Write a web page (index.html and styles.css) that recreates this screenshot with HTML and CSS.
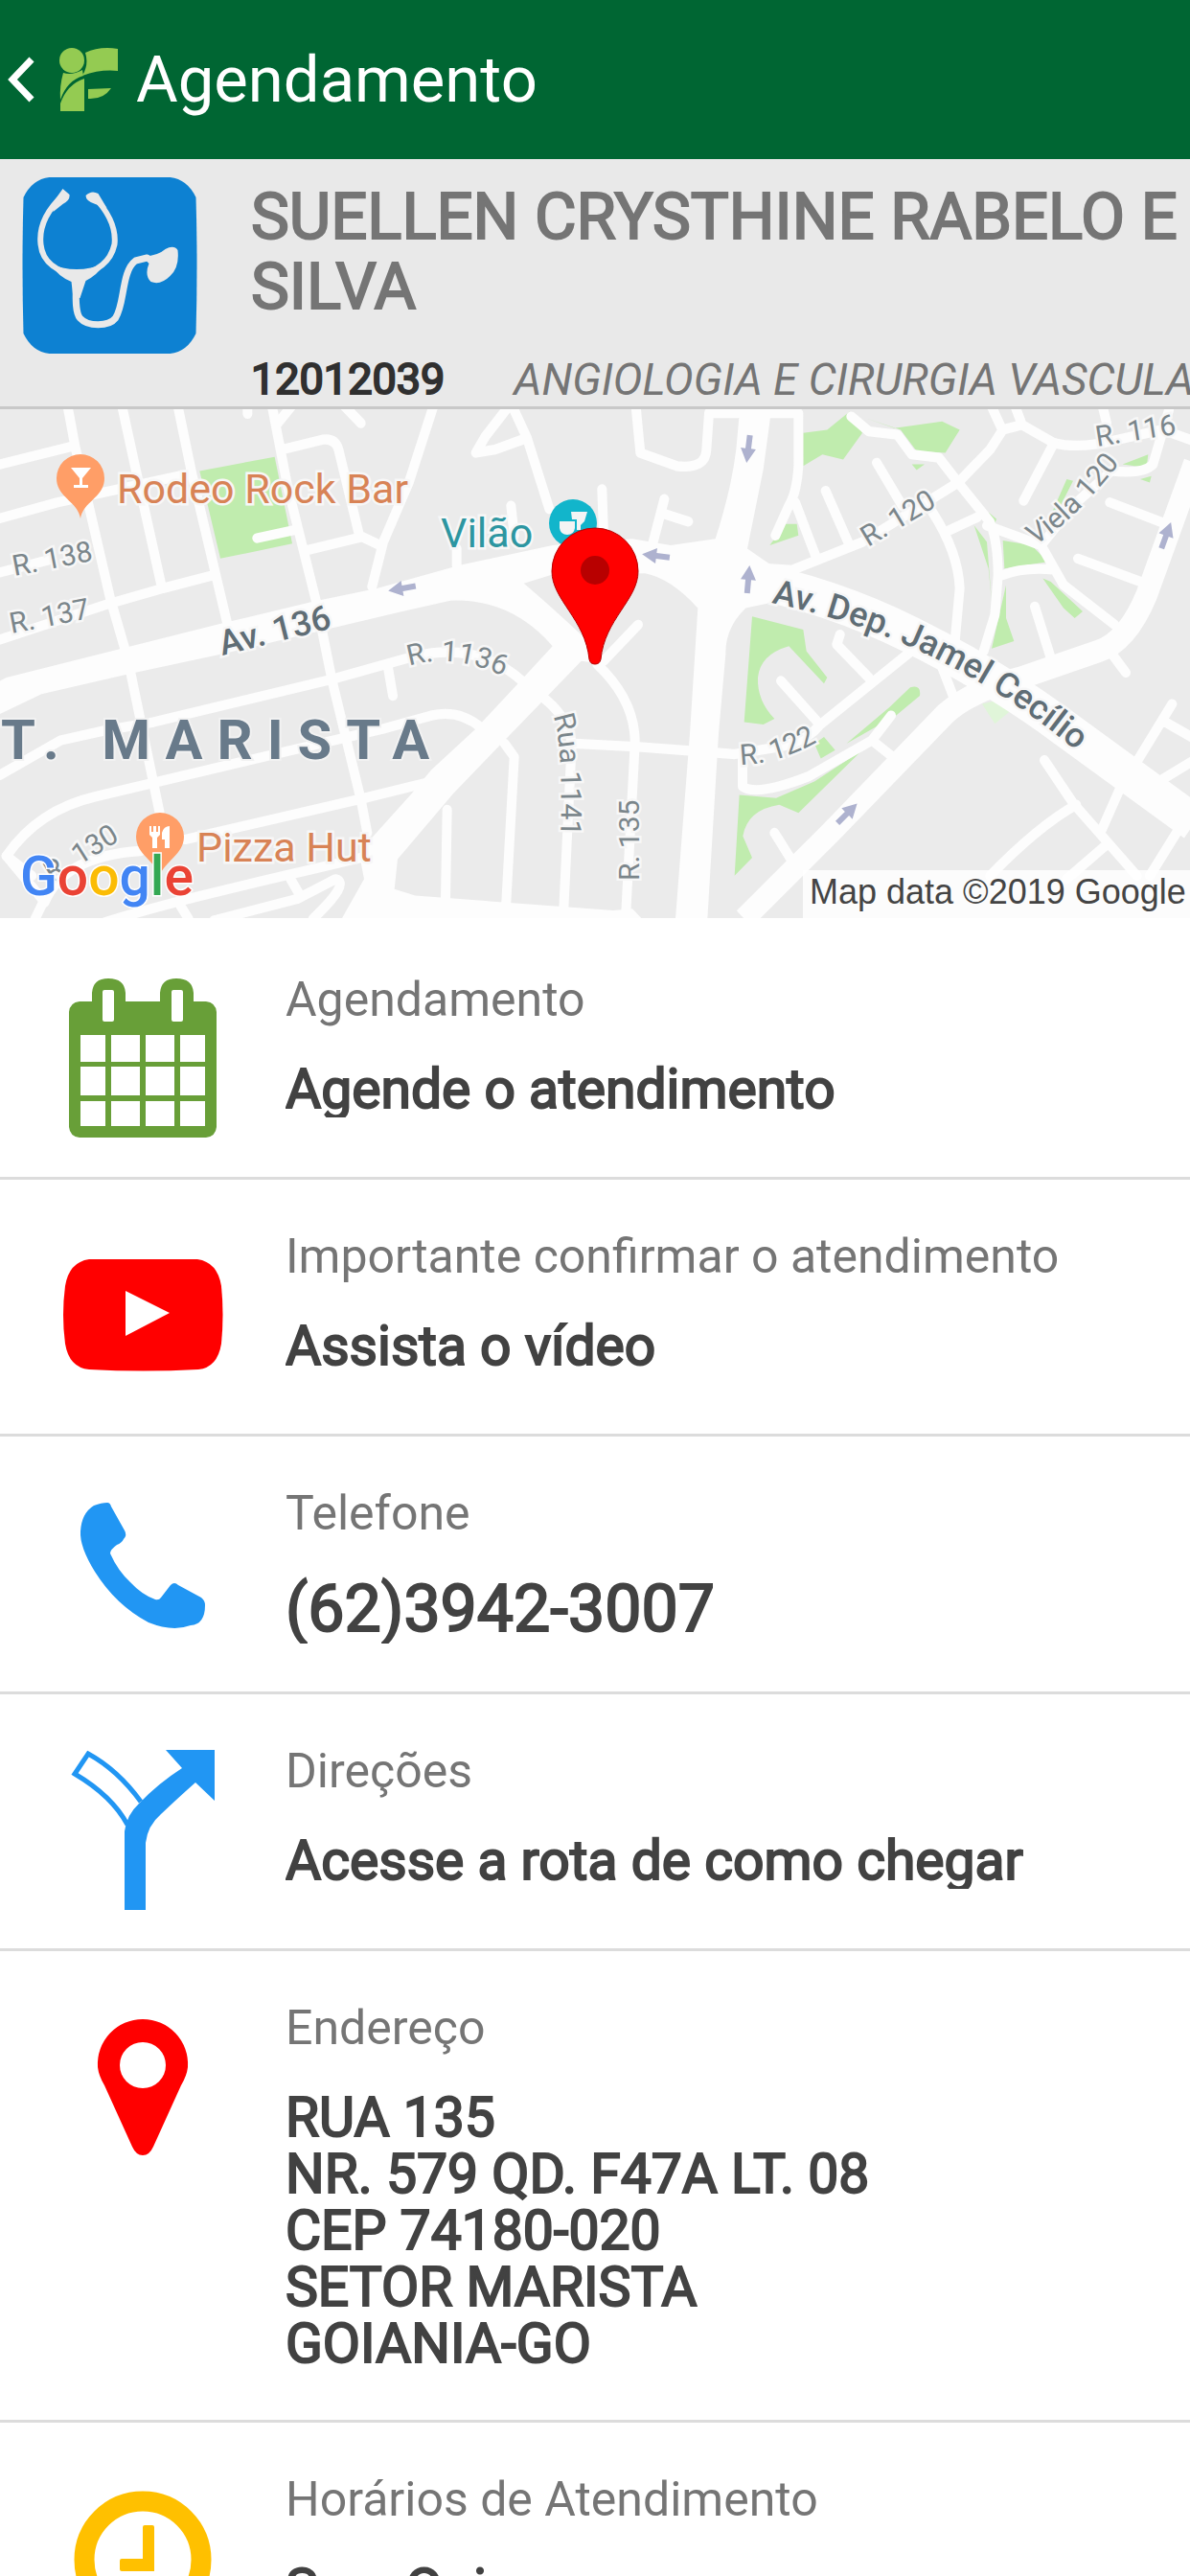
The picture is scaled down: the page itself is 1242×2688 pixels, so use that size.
FILE: index.html
```html
<!DOCTYPE html>
<html lang="pt-BR">
<head>
    <meta charset="UTF-8">
    <meta name="viewport" content="width=device-width, initial-scale=1.0">
    <title>Agendamento</title>
    <link rel="stylesheet" href="styles.css">
</head>
<body>
    <header class="topbar">
        <button class="back-button" type="button" aria-label="Voltar">
            <svg class="back-icon" viewBox="0 0 28 48"><path d="M25 3 L5 24 L25 45" fill="none" stroke="#fff" stroke-width="7"/></svg>
        </button>
        <svg class="logo" viewBox="0 0 62 67" fill="#94cb52">
            <ellipse cx="13" cy="13" rx="13" ry="13"/>
            <path d="M27 5 Q42 -2 61 1 V24 Q43 22 24 29 Q31 17 27 5z"/>
            <path d="M4 26 Q13 29 24 23 L25 29 Q8 34 1 54 Q0 40 4 26z"/>
            <path d="M1 66 V58 Q8 38 26 32 V66z"/>
            <path d="M30 43 L54 42 Q46 54 30 53z"/>
        </svg>
        <h1 class="topbar-title">Agendamento</h1>
    </header>

    <main class="content">
        <section class="profile">
            <svg class="profile-icon" viewBox="0 0 182 184">
                <path fill="#0d81d2" d="M28 0 H154 Q172 2 181 21 Q183 92 181 163 Q172 182 154 184 H28 Q10 182 1 163 Q-1 92 1 21 Q10 2 28 0z"/>
                <g fill="none" stroke="#e9e9e9" stroke-width="6" stroke-linecap="round" stroke-linejoin="round">
                    <path d="M42 19 C26 34 17 52 19 70 C21 90 38 99 57 102 C78 99 92 88 96 70 C98 52 88 34 74 20"/>
                    <path d="M56 104 C56 120 54 140 60 147 C68 156 90 156 97 147 C107 132 103 98 118 87 L130 84" stroke-width="7"/>
                </g>
                <path fill="#e9e9e9" d="M42 12 L49 18 Q50 24 42 28 L32 36 L32 26z M66 19 Q72 13 79 17 L88 32 L76 28 Q66 25 66 19z M28 90 Q56 102 86 90 Q78 102 66 108 L60 126 L53 126 L51 109 Q38 104 28 90z M124 82 Q140 83 149 75 Q158 70 162 76 Q164 94 154 103 Q144 113 134 109 Q127 102 132 90z"/>
            </svg>
            <div class="profile-info">
                <h2 class="profile-name">SUELLEN CRYSTHINE RABELO E SILVA</h2>
                <p class="profile-meta">
                    <span class="profile-code">12012039</span>
                    <em class="profile-specialty">ANGIOLOGIA E CIRURGIA VASCULAR</em>
                </p>
            </div>
        </section>

        <svg class="map" viewBox="0 426 1242 531" role="img" aria-label="Mapa do consultório">
            <rect class="map-ground" x="0" y="426" width="1242" height="531"/>

            <!-- Quadras, parques e ruas -->
            <svg x="0" y="426" width="1242" height="531" viewBox="0 18 3726 1540" preserveAspectRatio="none">
                <g class="map-park">
                    <path d="M625 205 L860 162 L915 425 L690 470z"/>
                    <path d="M2355 645 L2515 685 L2525 750 L2590 830 L2580 848 L2470 735 Q2380 760 2373 830 Q2370 900 2425 955 L2390 972 L2330 965z"/>
                    <path d="M2315 1185 L2430 1195 L2550 1145 L2700 1050 L2500 1240 L2440 1215 Q2340 1230 2326 1310 L2355 1375 L2300 1430z"/>
                    <path d="M2515 90 L2590 80 L2660 25 L2700 90 L2640 170 L2575 155 L2515 190z"/>
                    <path d="M2710 45 L2800 75 L2950 55 L3005 80 L2960 150 L2870 145 L2820 80z"/>
                    <path d="M2855 185 H2895 L2870 202z M3050 370 L3090 420 L3105 600 L3095 500z M3095 330 L3120 350 L3115 365z"/>
                    <path d="M3140 415 L3230 430 L3280 480 L3145 500z M3150 550 V650 L3175 720 L3105 742z"/>
                    <path d="M3265 530 L3290 540 L3390 630 L3365 650 L3330 620z M3420 600 L3490 650z M3515 185 L3595 155 L3590 195z M3570 230 L3605 220 L3600 240z M3340 230 L3360 235 L3310 330 L3285 350z"/>
                    <path d="M2480 205 L2460 290z M2460 365 H2495 L2500 400 L2410 430z M2550 1030 L2580 1010 L2615 1050 L2570 1075z M2785 920 L2850 860 Q2885 850 2880 885 L2805 945 L2650 1030z"/>
                </g>
                <path class="map-park-light" d="M3075 910 L3120 900 L3165 930 L3115 970z"/>

                <g class="map-street">
                    <path d="M210 0 L235 130 L345 590 L390 740 M410 820 L500 1240 M0 185 L235 128 M0 348 L180 300 L600 212"/>
                    <path d="M380 0 L425 200 L505 550 M555 0 L600 210 L710 660 M0 512 L150 475 M0 715 L330 610 L510 560 L670 520"/>
                    <path d="M850 0 L900 250 L990 600 L1040 840 L1130 1200 L1150 1300 M885 140 L1010 110 Q1050 105 1060 140 L1125 400 L1190 430 M960 445 L1130 405"/>
                    <path d="M870 60 L920 0 M1070 0 L1130 60 M775 0 V32 M805 408 L930 382"/>
                    <path d="M1360 0 L1280 240 L1200 420 L1165 555"/>
                    <path d="M0 1125 L190 1020 L330 990 L480 965 L1040 835 L1300 765 Q1500 720 1640 845 M1215 800 L1230 885"/>
                    <path d="M100 1430 L20 1370 Q120 1230 300 1190 L780 1080 L1200 985 L1350 945 Q1440 925 1510 985 M580 1320 L1140 1195 L1330 1150"/>
                    <path d="M20 1370 L140 1510 Q200 1370 440 1355 M110 1560 L140 1500 M330 1570 C600 1490 900 1430 1150 1370 M670 1565 L930 1500 L1050 1440 Q1100 1450 980 1560 M910 1440 L940 1490 M565 1520 L590 1560"/>
                    <path d="M1600 0 L1520 100 L1490 150 L1550 140 L1650 105 M1600 0 L1650 105 L1720 320 M1600 310 L1610 400 M1885 260 L1890 400 M1430 440 V490"/>
                    <path d="M1990 0 L2005 150 L2120 190 Q2210 200 2212 140 L2220 30 H2310 M2080 290 L2045 420 M2080 335 L2155 358"/>
                    <path d="M1580 1030 L1610 1070 L1585 1510 M1400 1230 L1395 1500 M1700 890 Q1780 950 1790 1030 L1765 1530 M1870 790 Q1990 900 1988 1030 L1960 1540 M1890 780 L1998 670"/>
                    <path d="M1800 1030 L2000 1040 L2300 1062 L2440 1040 Q2530 1020 2565 975 L2860 745 M2325 1080 V1160 Q2370 1190 2530 1130 L2730 1020 L2790 945 M2730 1020 L2795 1070"/>
                    <path d="M2400 30 H2500 V190 Q2495 270 2470 310 L2428 400 M2490 300 L2555 465 M2585 265 L2660 430 M2745 180 L2825 310 M2920 330 Q3000 450 3005 560 L2990 720"/>
                    <path d="M2400 500 L2480 505 L2700 420 L3000 240 L3100 140 L3140 80 L3200 65 L3300 120 Q3380 140 3500 110 L3640 80 L3740 115 M3100 0 L3138 80 M3175 0 L3200 65 M3450 0 L3465 60"/>
                    <path d="M2665 40 L2720 85 L2810 95 L2855 155 L2940 165 L3000 240 L3100 360 Q3125 420 3125 520 L3115 640 L3080 750 M2960 390 L3060 345 M3090 370 L3260 430 L3330 550 L3490 670 M3140 520 Q3200 495 3300 503"/>
                    <path d="M3300 120 L3205 295 M3660 20 L3610 185 Q3580 215 3480 205 L3360 310 L3260 430 M3475 300 L3650 365 M3375 470 L3570 540 M3240 615 L3290 770 M3475 750 L3525 815 M2950 800 L2990 900 M2630 700 L2620 730 L2720 830 M2445 840 L2565 970"/>
                    <path d="M3270 1080 L3360 1210 L3560 1430 M3100 1430 Q3250 1280 3370 1215 M3340 1440 L3460 1340 M3450 1290 L3505 1170 M3550 1100 L3670 910 M3640 960 L3730 1010 M3620 1150 L3730 1085 M3600 1430 L3690 1290 M2425 1300 L2480 1385"/>
                </g>

                <path class="map-road" d="M0 840 L20 830 L700 665 L980 600 L1180 560 L1440 490 L1730 430 L1980 410 L2100 430 L2240 410 Q2290 260 2305 140 L2318 0 H2418 L2390 200 L2340 440 L2430 500 L2430 600 L2335 620 Q2270 680 2272 760 L2250 1000 L2215 1560 H2115 L2160 1000 L2185 620 Q2100 530 2020 515 L1730 518 L1640 545 Q1720 610 1830 710 L1900 790 L1820 780 L1710 890 L1580 1020 L1420 1180 L1245 1380 L1235 1470 L1300 1490 L1920 1535 L1980 1530 L2010 1560 H1070 L1140 1440 L1130 1390 L1150 1330 L1290 1180 L1350 1110 L1490 985 L1620 850 L1730 735 Q1600 590 1410 597 L1260 630 L690 760 L400 820 L130 880 L0 940z"/>
                <path class="map-avenue" d="M2330 530 Q2600 580 2850 700 T3300 960 L3740 1270"/>
                <path class="map-avenue map-avenue-narrow" d="M3740 180 L3650 420 L3590 580 Q3530 720 3440 750 L3200 830 Q3040 870 2960 940 L2600 1300 L2330 1560"/>
            </svg>

            <g fill="#aeb2cf">
                <path transform="translate(420 613) rotate(170)" d="M-14 -3 H0 V-8 L15 0 L0 8 V3 H-14z"/>
                <path transform="translate(685 579) rotate(187)" d="M-14 -3 H0 V-8 L15 0 L0 8 V3 H-14z"/>
                <path transform="translate(781 467) rotate(97)" d="M-14 -3 H0 V-8 L15 0 L0 8 V3 H-14z"/>
                <path transform="translate(781 604) rotate(-85)" d="M-14 -3 H0 V-8 L15 0 L0 8 V3 H-14z"/>
                <path transform="translate(1217 558) rotate(-70)" d="M-14 -3 H0 V-8 L15 0 L0 8 V3 H-14z"/>
                <path transform="translate(884 848) rotate(-45)" d="M-14 -3 H0 V-8 L15 0 L0 8 V3 H-14z"/>
            </g>

            <!-- Nomes das ruas -->
            <defs>
                <path id="rua1136" d="M427 694 Q478 678 540 712"/>
                <path id="rua1141" d="M577 746 Q588 770 585 880"/>
                <path id="rua122" d="M773 797 Q815 797 865 766"/>
                <path id="viela120" d="M1080 568 Q1120 545 1175 474"/>
                <path id="jamel" d="M805 628 Q1000 668 1150 806"/>
            </defs>
            <g class="map-label">
                <text x="15" y="600" transform="rotate(-11 15 600)">R. 138</text>
                <text x="12" y="660" transform="rotate(-11 12 660)">R. 137</text>
                <text x="54" y="920" transform="rotate(-32 54 920)">R. 130</text>
                <text x="667" y="918" transform="rotate(-90 667 918)">R. 135</text>
                <text x="906" y="570" transform="rotate(-31 906 570)">R. 120</text>
                <text x="1145" y="465" transform="rotate(-9 1145 465)">R. 116</text>
                <text><textPath href="#rua1136">R. 1136</textPath></text>
                <text><textPath href="#rua1141">Rua 1141</textPath></text>
                <text><textPath href="#rua122">R. 122</textPath></text>
                <text><textPath href="#viela120">Viela 120</textPath></text>
            </g>
            <g class="map-label map-label-avenue">
                <text x="232" y="683" transform="rotate(-14 232 683)">Av. 136</text>
                <text><textPath href="#jamel">Av. Dep. Jamel Cecílio</textPath></text>
            </g>
            <text class="map-district" x="1" y="791">T. MARISTA</text>

            <!-- Estabelecimentos -->
            <path fill="#ff9e67" d="M84 473 A25 25 0 0 1 109 498 C109 518 87 522 84 540 C81 522 59 518 59 498 A25 25 0 0 1 84 473z"/>
            <path fill="#fff" d="M74 487 H95 L86 498 V505 H92 V508 H77 V505 H83 V498z"/>
            <path fill="#ff9e67" d="M167 847 A25 25 0 0 1 192 872 C192 890 172 898 167 912 C162 898 142 890 142 872 A25 25 0 0 1 167 847z"/>
            <path fill="#fff" d="M156 861 H158 V867 H160 V861 H163 V867 H165 V861 H167 V870 L164 873 V884 H159 V873 L156 870z M169 868 Q171 861 177 861 V884 H172 V875 H169z"/>
            <text class="map-place" x="122" y="524">Rodeo Rock Bar</text>
            <text class="map-place" x="205" y="898">Pizza Hut</text>
            <circle cx="598" cy="545" r="25" fill="#12b5cb"/>
            <path fill="#f4f4f4" d="M584 543 H600 V550 Q599 557 592 557 Q585 557 584 550z M596 533 H613 L610 543 L606 547 V552 H602 V541 H597z"/>
            <text class="map-place map-place-teal" x="460" y="570">Vilão</text>

            <path fill="#f00" stroke="#b80000" stroke-width="1" d="M621 550 A45 45 0 0 1 666 595 C666 625 631 645 627 687 Q626 692 621 692 Q616 692 615 687 C611 645 576 625 576 595 A45 45 0 0 1 621 550z"/>
            <circle cx="621" cy="594" r="15" fill="#b80000"/>

            <text class="map-brand" x="21" y="933"><tspan fill="#4285f4">G</tspan><tspan fill="#ea4335">o</tspan><tspan fill="#fbbc05">o</tspan><tspan fill="#4285f4">g</tspan><tspan fill="#34a853">l</tspan><tspan fill="#ea4335">e</tspan></text>
            <rect x="838" y="907" width="404" height="50" fill="#fff" fill-opacity="0.85"/>
            <text class="map-credit" x="845" y="942">Map data ©2019 Google</text>
        </svg>

        <nav class="actions">
            <a class="action" href="#agendar">
                <svg class="action-icon" viewBox="0 0 168 168">
                    <path fill="#689f38" fill-rule="evenodd" d="M18 25 H31 V16 Q32 1 48 1 Q65 1 66 16 V25 H102 V16 Q103 1 119 1 Q136 1 137 16 V25 H150 Q160 26 161 36 V156 Q160 166 150 167 H18 Q8 166 7 156 V36 Q8 26 18 25z M42 15 V44 Q42 46 44 46 H52 Q54 46 54 44 V15 Q54 13 52 13 H44 Q42 13 42 15z M114 15 V44 Q114 46 116 46 H124 Q126 46 126 44 V15 Q126 13 124 13 H116 Q114 13 114 15z M19 60 V88 H45 V60z M51 60 V88 H81 V60z M87 60 V88 H117 V60z M123 60 V88 H149 V60z M19 93 V123 H45 V93z M51 93 V123 H81 V93z M87 93 V123 H117 V93z M123 93 V123 H149 V93z M19 129 V155 H45 V129z M51 129 V155 H81 V129z M87 129 V155 H117 V129z M123 129 V155 H149 V129z"/>
                </svg>
                <span class="action-text">
                    <span class="action-label">Agendamento</span>
                    <strong class="action-value">Agende o atendimento</strong>
                </span>
            </a>
            <a class="action" href="#video">
                <svg class="action-icon" viewBox="0 0 168 168">
                    <path fill="#f00" d="M28 26 H141 Q162 29 166 54 Q169 84 166 114 Q162 139 142 141 Q84 144 28 141 Q7 139 3 114 Q-1 84 3 54 Q7 29 28 26z"/>
                    <path fill="#fff" d="M66 59 L112 82 L66 106z"/>
                </svg>
                <span class="action-text">
                    <span class="action-label">Importante confirmar o atendimento</span>
                    <strong class="action-value">Assista o vídeo</strong>
                </span>
            </a>
            <a class="action" href="tel:6239423007">
                <svg class="action-icon" viewBox="0 0 168 168">
                    <path fill="#2196f3" d="M33 15 Q41 12 47 12 Q50 12 51 16 L65 41 Q68 46 64 50 Q62 54 57 56 Q50 61 50 65 Q58 83 71 95 Q83 108 97 113 Q101 114 103 111 L113 98 Q117 94 121 98 L145 111 Q149 114 149 119 Q149 139 134 140 Q115 147 90 137 Q56 119 34 84 Q18 58 19 42 Q20 23 33 15z"/>
                </svg>
                <span class="action-text">
                    <span class="action-label">Telefone</span>
                    <strong class="action-value action-value-large">(62)3942-3007</strong>
                </span>
            </a>
            <a class="action" href="#rota">
                <svg class="action-icon" viewBox="0 0 168 168">
                    <path fill="#2196f3" d="M108 1 H159 V54 L139 35 Q122 50 103 68 Q89 80 87 98 V168 H65 V86 Q67 69 80 57 Q100 36 125 20z"/>
                    <path fill="none" stroke="#2196f3" stroke-width="5" d="M68 79 Q52 49 13 26 L27 5 Q58 22 82 55"/>
                </svg>
                <span class="action-text">
                    <span class="action-label">Direções</span>
                    <strong class="action-value">Acesse a rota de como chegar</strong>
                </span>
            </a>
            <a class="action" href="#endereco">
                <svg class="action-icon" viewBox="0 0 168 168">
                    <path fill="#f00" d="M84 14 A47 47 0 0 1 131 64 Q130 73 124 83 L95 147 Q91 156 84 156 Q77 156 73 147 L44 83 Q38 73 37 64 A47 47 0 0 1 84 14z"/>
                    <circle cx="84" cy="62" r="24" fill="#fff"/>
                </svg>
                <span class="action-text">
                    <span class="action-label">Endereço</span>
                    <strong class="action-value">RUA 135<br>NR. 579 QD. F47A LT. 08<br>CEP 74180-020<br>SETOR MARISTA<br>GOIANIA-GO</strong>
                </span>
            </a>
            <a class="action" href="#horarios">
                <svg class="action-icon" viewBox="0 0 168 168">
                    <circle cx="84" cy="86" r="61" fill="none" stroke="#ffc000" stroke-width="21"/>
                    <path fill="#ffc000" d="M86 50 H94 Q96 50 96 52 V98 H62 Q60 98 60 96 V87 Q60 85 62 85 H84 V52 Q84 50 86 50z"/>
                </svg>
                <span class="action-text">
                    <span class="action-label">Horários de Atendimento</span>
                    <strong class="action-value">Seg. Qui</strong>
                </span>
            </a>
        </nav>
    </main>
</body>
</html>
```
FILE: styles.css
```css
* {
    margin: 0;
    padding: 0;
    box-sizing: border-box;
}

:root {
    --green: #006633;
    --panel: #e9e9e9;
    --line: #dcdcdc;
    --text: #424242;
    --muted: #757575;
}

body {
    display: flex;
    flex-direction: column;
    height: 100vh;
    background: #fff;
    color: var(--text);
    font-family: Roboto, sans-serif;
}

.topbar {
    display: flex;
    align-items: center;
    flex-shrink: 0;
    height: 166px;
    padding-left: 8px;
    background: var(--green);
    color: #fff;
}

.back-button {
    display: flex;
    margin-right: 26px;
    background: none;
    border: none;
    cursor: pointer;
}

.back-icon {
    width: 28px;
    height: 48px;
}

.logo {
    width: 62px;
    height: 67px;
    margin-right: 18px;
}

.topbar-title {
    font-size: 67px;
    line-height: 76px;
    font-weight: 400;
}

.content {
    flex: 1;
    min-height: 0;
    overflow-x: hidden;
    overflow-y: auto;
    scrollbar-width: none;
}

/* Médico */
.profile {
    display: flex;
    gap: 56px;
    padding: 19px 0 2px 23px;
    background: var(--panel);
    border-bottom: 3px solid #c8c8c8;
}

.profile-icon {
    flex-shrink: 0;
    width: 183px;
    height: 184px;
}

.profile-info {
    flex: 1;
    min-width: 0;
    padding-top: 5px;
}

.profile-name {
    margin-bottom: 34px;
    color: var(--muted);
    font-size: 67px;
    line-height: 73px;
    font-weight: 400;
    -webkit-text-stroke: 2px currentColor;
}

.profile-meta {
    display: flex;
    gap: 72px;
    font-size: 45px;
    line-height: 52px;
    white-space: nowrap;
}

.profile-code {
    color: #303030;
    -webkit-text-stroke: 2px currentColor;
}

.profile-specialty {
    color: var(--muted);
    font-size: 46px;
}

/* Mapa */
.map {
    display: block;
    width: 100%;
    height: auto;
}

.map-ground {
    fill: #ebebeb;
}

.map-park {
    fill: #c0ecae;
}

.map-park-light {
    fill: #e0f5d9;
}

.map-street {
    fill: none;
    stroke: #fdfdfd;
    stroke-width: 30;
    stroke-linecap: round;
    stroke-linejoin: round;
}

.map-road {
    fill: #fdfdfd;
}

.map-avenue {
    fill: none;
    stroke: #fdfdfd;
    stroke-width: 112;
}

.map-avenue-narrow {
    stroke-width: 68;
}

.map-label {
    fill: #7b868b;
    stroke: #f7f7f7;
    stroke-width: 5px;
    paint-order: stroke;
    font-size: 30px;
}

.map-label-avenue {
    fill: #5f6d75;
    font-size: 36px;
    font-weight: 500;
}

.map-district {
    fill: #687a8a;
    stroke: #f2f2f2;
    stroke-width: 4px;
    paint-order: stroke;
    font-size: 58px;
    font-weight: 700;
    letter-spacing: 15px;
}

.map-place {
    fill: #d88356;
    stroke: #f7f7f7;
    stroke-width: 5px;
    paint-order: stroke;
    font-size: 43px;
}

.map-place-teal {
    fill: #2d96a1;
}

.map-brand {
    stroke: #fff;
    stroke-width: 3px;
    paint-order: stroke;
    font-size: 57px;
    font-weight: 500;
}

.map-credit {
    fill: #444;
    font-family: "Liberation Sans", Arial, sans-serif;
    font-size: 36px;
}

/* Lista de ações */
.actions {
    padding-top: 5px;
}

.action {
    display: flex;
    gap: 65px;
    min-height: 268px;
    padding: 52px 24px 50px 65px;
    border-bottom: 3px solid var(--line);
    color: inherit;
    text-decoration: none;
}

.action-icon {
    flex-shrink: 0;
    width: 168px;
    height: 168px;
    margin-top: 5px;
    margin-bottom: -10px;
}

.action-text {
    display: flex;
    flex-direction: column;
    gap: 36px;
}

.action-label {
    color: var(--muted);
    font-size: 50px;
    line-height: 56px;
}

.action-value {
    overflow: hidden;
    font-size: 57px;
    line-height: 59px;
    font-weight: 400;
    -webkit-text-stroke: 2px currentColor;
}

.action-value-large {
    font-size: 68px;
    line-height: 72px;
}
```
